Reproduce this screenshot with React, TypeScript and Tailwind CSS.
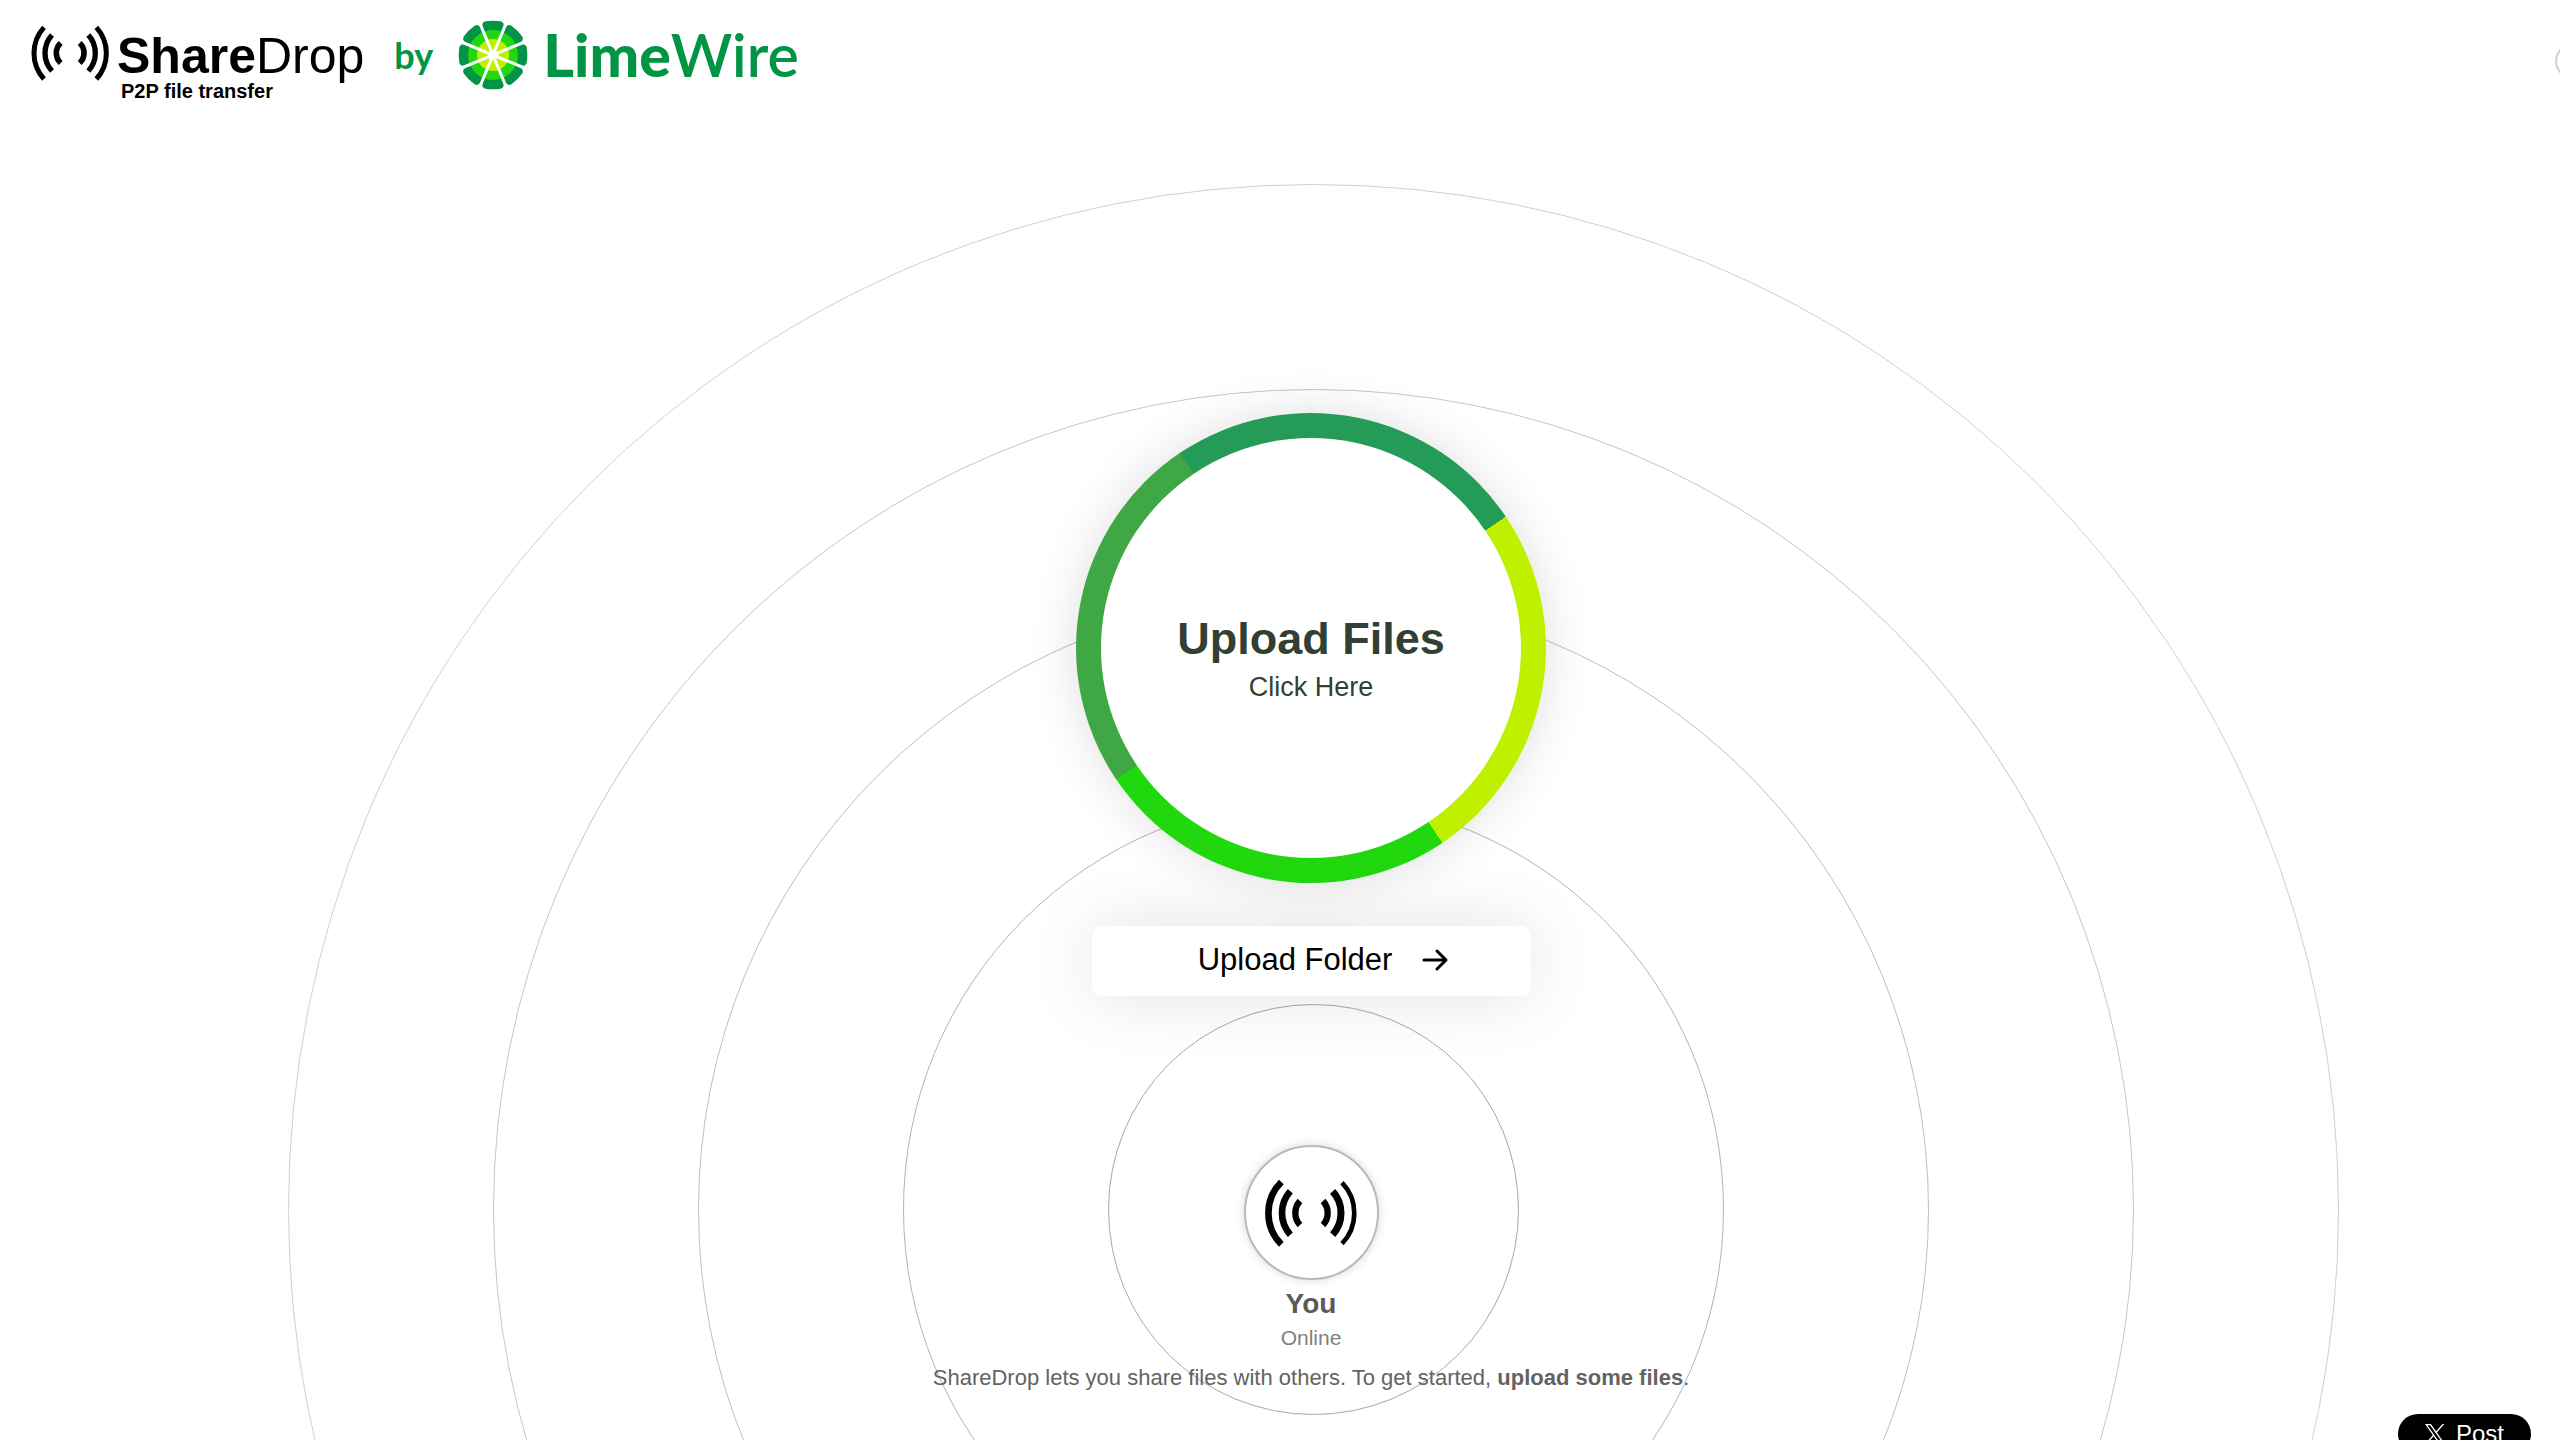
import React from "react";

const RINGS = [
  { r: 205, stroke: "#a8a8a8" },
  { r: 410, stroke: "#b4b4b4" },
  { r: 615, stroke: "#bebebe" },
  { r: 820, stroke: "#c6c6c6" },
  { r: 1025, stroke: "#d0d0d0" },
];

function Rings() {
  return (
    <svg
      className="h-[2051px] w-[2051px] shrink-0"
      viewBox="-1025.5 -1025.5 2051 2051"
      fill="none"
      aria-hidden="true"
    >
      {RINGS.map((ring) => (
        <circle key={ring.r} r={ring.r} stroke={ring.stroke} strokeWidth="1" />
      ))}
    </svg>
  );
}

function WavesLogo() {
  return (
    <svg className="h-[60px] w-[80px]" viewBox="90 70 240 180" fill="none" stroke="#000" aria-hidden="true">
      <path d="M132 83A115 115 0 0 0 132 238" strokeWidth="15" />
      <path d="M156 106A80 80 0 0 0 156 214" strokeWidth="16" />
      <path d="M182 130A41 41 0 0 0 182 190" strokeWidth="17" />
      <path d="M239 130A41 41 0 0 1 239 190" strokeWidth="17" />
      <path d="M265 106A80 80 0 0 1 265 214" strokeWidth="16" />
      <path d="M289 83A115 115 0 0 1 289 238" strokeWidth="15" />
    </svg>
  );
}

function WavesAvatar() {
  return (
    <svg className="h-[70px] w-[100px]" viewBox="123 173 300 210" fill="none" stroke="#000" aria-hidden="true">
      <path d="M184 185A132 132 0 0 0 184 372" strokeWidth="20" />
      <path d="M211 213A97 97 0 0 0 211 343" strokeWidth="20" />
      <path d="M240 242A53 53 0 0 0 240 314" strokeWidth="19" />
      <path d="M309 242A53 53 0 0 1 309 314" strokeWidth="19" />
      <path d="M338 213A97 97 0 0 1 338 343" strokeWidth="21" />
      <path d="M366 187A132 132 0 0 1 366 370" strokeWidth="14" />
    </svg>
  );
}

function Lime() {
  return (
    <svg className="h-[70px] w-[70px]" viewBox="-105 -105 210 210" aria-hidden="true">
      {[0, 45, 90, 135, 180, 225, 270, 315].map((angle) => (
        <path
          key={angle}
          transform={`rotate(${angle})`}
          fill="#009444"
          d="M0 0L-31 -82Q-36 -97 -23 -101Q0 -105 23 -101Q36 -97 31 -82Z"
        />
      ))}
      <circle r="75" fill="#22d70f" />
      <circle r="48" fill="#bff000" />
      {[22.5, 67.5, 112.5, 157.5].map((angle) => (
        <path key={angle} transform={`rotate(${angle})`} d="M0 -112V112" stroke="#fff" strokeWidth="9" />
      ))}
      <circle r="15" fill="#fff" />
    </svg>
  );
}

function XLogo() {
  return (
    <svg className="h-5 w-5" viewBox="0 0 24 24" fill="#fff" aria-hidden="true">
      <path d="M14.258 10.152 23.176 0h-2.113l-7.747 8.813L7.133 0H0l9.352 13.328L0 23.973h2.113l8.176-9.309 6.531 9.309h7.133zm-2.895 3.293-.949-1.328L2.875 1.56h3.246l6.086 8.523.945 1.328 7.91 11.078h-3.246z" />
    </svg>
  );
}

export default function App() {
  return (
    <div className="relative h-screen overflow-hidden bg-white font-['Liberation_Sans',Arial,sans-serif] text-black">
      <div className="pointer-events-none absolute inset-x-0 top-[184px] flex justify-center pl-[67px]">
        <Rings />
      </div>

      <header className="relative flex h-[120px] items-start justify-between">
        <div className="flex items-start">
          <a href="#home" className="flex pl-[30px] pt-[23px]">
            <WavesLogo />
            <span className="flex flex-col pl-[7px] pt-[3px]">
              <span className="text-[50px] leading-[60px]">
                <strong>Share</strong>Drop
              </span>
              <span className="-mt-[7px] pl-1 text-[20px] font-bold leading-6">P2P file transfer</span>
            </span>
          </a>
          <a
            href="#limewire"
            className="flex items-center pl-[30px] pt-5 font-['Lato',sans-serif] text-[#009444]"
          >
            <span className="text-[36px] font-bold leading-[70px]">by</span>
            <span className="pl-[25px]">
              <Lime />
            </span>
            <span className="pl-[15px] text-[59px] font-semibold leading-[70px]">
              <span className="font-black">Lime</span>Wire
            </span>
          </a>
        </div>
        <button
          type="button"
          aria-label="About"
          className="-mr-[31px] mt-[43px] h-9 w-9 shrink-0 rounded-full border-2 border-[#cfcfcf]"
        />
      </header>

      <main className="relative flex flex-col items-center pl-[62px] pt-[293px]">
        <button
          type="button"
          className="flex h-[470px] w-[470px] items-center justify-center rounded-full bg-[conic-gradient(from_-34deg,#259b58_0_90deg,#bff000_90deg_180deg,#21d80f_180deg_270deg,#3fa845_270deg_360deg)] shadow-[0_0_50px_rgba(0,0,0,0.13)]"
        >
          <span className="flex h-[420px] w-[420px] flex-col items-center justify-center rounded-full bg-white pt-[26px] text-[#323f33]">
            <strong className="text-[45px] leading-[52px]">Upload Files</strong>
            <span className="text-[27px] leading-[44px]">Click Here</span>
          </span>
        </button>

        <button
          type="button"
          className="mt-[43px] flex h-[70px] w-[439px] items-center justify-center gap-[30px] rounded-[10px] bg-white pb-[2px] pl-[26px] text-[31px] shadow-[0_0_70px_rgba(0,0,0,0.12)]"
        >
          Upload Folder
          <svg
            className="h-[24px] w-[28px]"
            viewBox="0 0 28 24"
            fill="none"
            stroke="#000"
            strokeWidth="3"
            strokeLinecap="round"
            strokeLinejoin="round"
            aria-hidden="true"
          >
            <path d="M2 12H24M15 3L24 12L15 21" />
          </svg>
        </button>

        <div className="mt-[149px] flex h-[135px] w-[135px] items-center justify-center rounded-full border-2 border-[#b9b9b9] bg-white shadow-[0_0_10px_rgba(0,0,0,0.16)]">
          <WavesAvatar />
        </div>
        <strong className="mt-2 text-[28px] leading-8 text-[#5a5a5a]">You</strong>
        <span className="mt-1 text-[21px] leading-7 text-[#808080]">Online</span>
        <p className="mt-3 text-[22px] leading-7 text-[#636363]">
          ShareDrop lets you share files with others. To get started, <strong>upload some files</strong>.
        </p>
      </main>

      <button
        type="button"
        className="absolute right-[29px] top-[1414px] flex h-[40px] w-[133px] items-center justify-center gap-[11px] rounded-full bg-black text-[24px] text-white"
      >
        <XLogo />
        Post
      </button>
    </div>
  );
}
